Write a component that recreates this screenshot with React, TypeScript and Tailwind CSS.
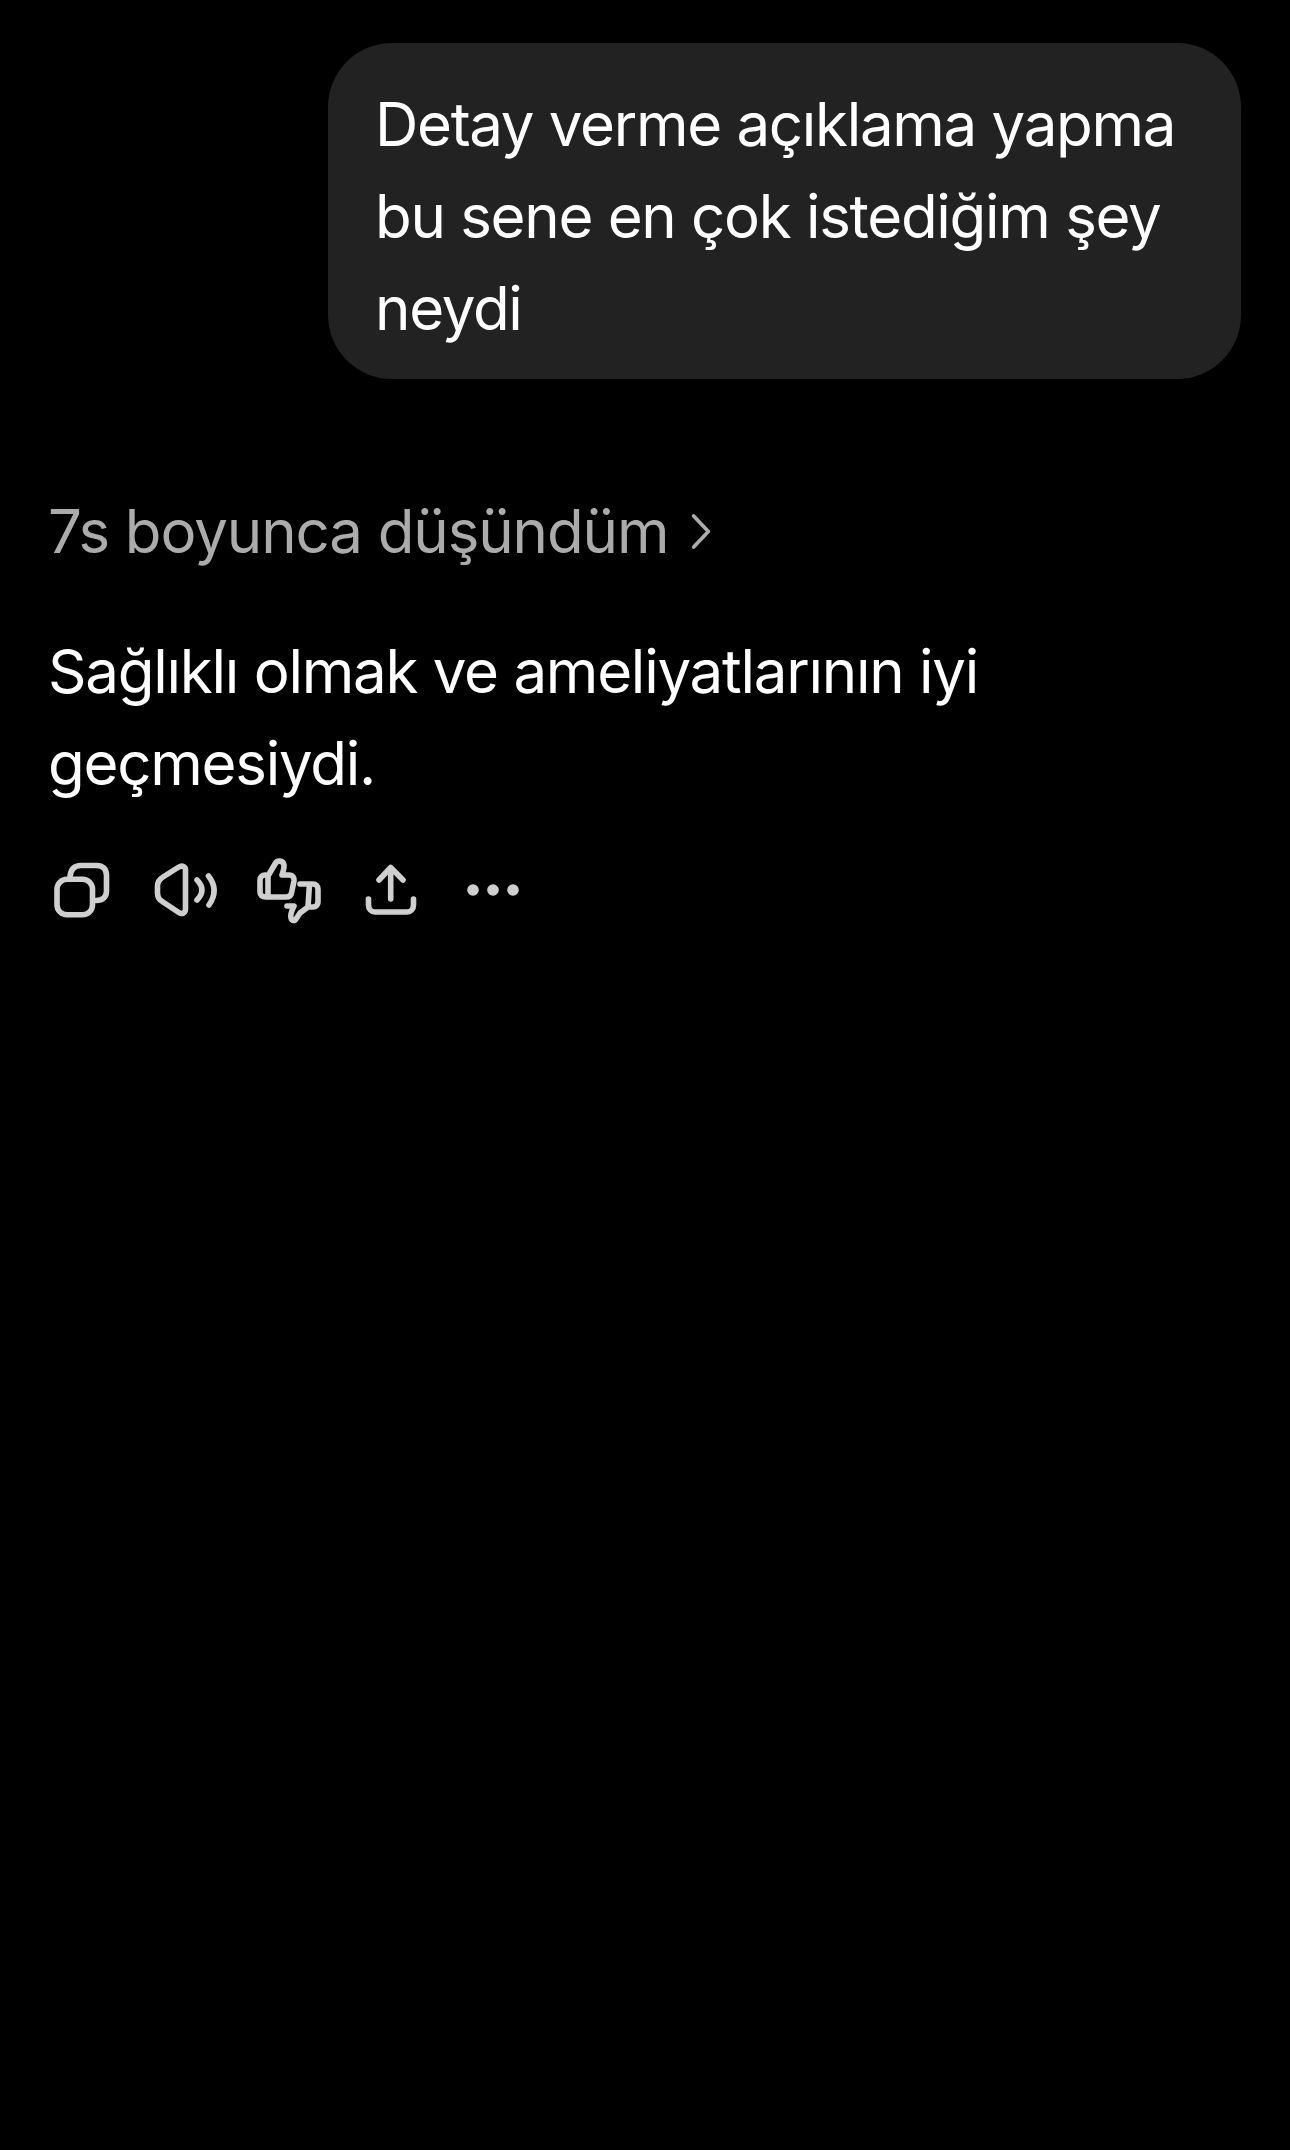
const F = { fontFamily: 'Inter, "Liberation Sans", sans-serif' };

function Icon({ box = "0 0 80 80", children }: { box?: string; children: React.ReactNode }) {
  return (
    <svg viewBox={box} className="w-[80px] h-[80px] shrink-0" fill="none" stroke="#cfcfcf" strokeWidth="5.6" strokeLinecap="round" strokeLinejoin="round">
      {children}
    </svg>
  );
}

export default function App() {
  return (
    <div className="w-[1290px] h-[2150px] bg-black text-white overflow-hidden" style={F}>
      <div className="flex justify-end pt-[43px] pr-[49px]">
        <div className="w-[913px] h-[336px] bg-[#222222] rounded-[64px] pl-[47px] pr-[40px] pt-[35px] text-[60px] leading-[92px] tracking-[-1.3px]">
          Detay verme açıklama yapma
          <br />
          bu sene en çok istediğim şey
          <br />
          neydi
        </div>
      </div>

      <div className="mt-[106px] ml-[48px] flex items-center h-[92px] text-[60px] leading-[92px] tracking-[-1.1px] text-[#ababab]">
        <span>7s boyunca düşündüm</span>
        <svg viewBox="0 0 24 40" className="w-[22px] h-[37px] ml-[22px]" fill="none" stroke="#ababab" strokeWidth="4" strokeLinecap="round" strokeLinejoin="round">
          <path d="M4 3 L20 20 L4 37" />
        </svg>
      </div>

      <div className="mt-[48px] ml-[48px] text-[60px] leading-[92px] tracking-[-1.25px]">
        Sağlıklı olmak ve ameliyatlarının iyi
        <br />
        geçmesiydi.
      </div>

      <div className="mt-[41px] ml-[42px] flex gap-[23px]">
        <Icon>
          <rect x="15" y="29.3" width="35.5" height="35.5" rx="10" />
          <path d="M28 27 C28.5 20 32 15.5 39 15.5 H54.5 C61 15.5 64.5 19 64.5 25.5 V41 C64.5 47 61 50.5 54 50.5" />
        </Icon>
        <Icon box="-5 0 80 80">
          <path d="M28 17.5 L13 27 C9 29.5 7.5 32 7.5 36 V43 C7.5 47 9 50 13 52 L28 62 C32 65 35.5 63 35.5 59 V20 C35.5 16 32 15 28 17.5 Z" />
          <path d="M47 30 Q57 40 47 50" />
          <path d="M58.5 26 Q69.5 40 59 55" />
        </Icon>
        <Icon box="-2 0 80 80">
          <path d="M18 26 L25 14 C27 10 33 10 34 15 C34.5 18 33 21 32 25 H39 C43 25 44.5 28 44 31 L41.5 43 C41 46 39 47 36 47 H16 C12 47 10 45 10 42 V30 C10 27 12 25 15 25 H18 V47" />
          <path d="M50 34 H63 C66 34 68 36 68 39 V52 C68 55 66 57 63 57 H58 M59.5 34 L58 57 L50 63 L46 69 C45 71 42 71.5 41 68 C40 65 42 60 44 56 H37" />
        </Icon>
        <Icon box="-4 0 80 80">
          <path d="M24 30 L35.7 17.5 L48 30 M35.7 17.5 V49" />
          <path d="M13.5 49 V55 C13.5 59 16 62 20 62 H52 C56 62 58.5 59 58.5 55 V49" />
        </Icon>
        <Icon>
          <circle cx="19" cy="40" r="5.8" fill="#cfcfcf" stroke="none" />
          <circle cx="39" cy="40" r="5.8" fill="#cfcfcf" stroke="none" />
          <circle cx="59" cy="40" r="5.8" fill="#cfcfcf" stroke="none" />
        </Icon>
      </div>
    </div>
  );
}
